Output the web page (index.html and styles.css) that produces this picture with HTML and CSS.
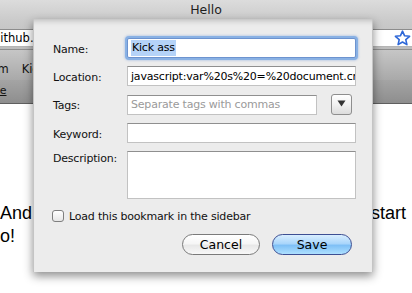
FILE: index.html
```html
<!DOCTYPE html>
<html>
<head>
<meta charset="utf-8">
<link rel="stylesheet" href="styles.css">
</head>
<body>
<div class="win">
  <div class="titlebar">Hello</div>
  <div class="toolbar">
    <div class="url">
      <span class="url-text">github.com/defunkt</span>
      <svg class="star" width="17" height="16" viewBox="0 0 17 16"><path d="M8.5 1.2 L10.6 5.8 L15.6 6.3 L11.8 9.6 L12.9 14.6 L8.5 12 L4.1 14.6 L5.2 9.6 L1.4 6.3 L6.4 5.8 Z" fill="#fff" stroke="#2d67d8" stroke-width="1.6" stroke-linejoin="round"/></svg>
    </div>
  </div>
  <div class="bookmarks"><span class="bm bm-first">Random</span><span class="bm">Kick ass</span></div>
  <div class="tabs"><span class="tab">Home</span></div>
  <div class="page">
    <p class="line"><span>And</span><span>start</span></p>
    <p class="line">o!</p>
  </div>

  <div class="sheet">
    <div class="form">
      <label class="lbl">Name:</label>
      <div class="field focused"><span class="sel">Kick ass</span></div>

      <label class="lbl">Location:</label>
      <div class="field">javascript:var%20s%20=%20document.createElement('script');</div>

      <label class="lbl">Tags:</label>
      <div class="tagrow">
        <div class="field tagfield"><span class="ph">Separate tags with commas</span></div>
        <div class="dd"><svg width="9" height="7" viewBox="0 0 9 7"><path d="M0.5 0.5 L8.5 0.5 L4.5 6.5 Z" fill="#333"/></svg></div>
      </div>

      <label class="lbl">Keyword:</label>
      <div class="field"></div>

      <label class="lbl lbl-top">Description:</label>
      <div class="field area"></div>
    </div>

    <div class="checkrow">
      <span class="cb"></span>
      <span class="cbtext">Load this bookmark in the sidebar</span>
    </div>

    <div class="btnrow">
      <button class="btn cancel">Cancel</button>
      <button class="btn save">Save</button>
    </div>
  </div>
</div>
</body>
</html>
```

FILE: styles.css
```css
* { box-sizing: border-box; }
html, body { margin: 0; padding: 0; }
body { width: 412px; height: 293px; overflow: hidden; background: #fff; }

.win {
  position: relative;
  width: 412px;
  height: 293px;
  overflow: hidden;
  font-family: "DejaVu Sans", sans-serif;
}

.titlebar {
  height: 20px;
  background: linear-gradient(#dcdcdc, #cbcbcb);
  text-align: center;
  font-size: 12.5px;
  line-height: 20px;
  color: #1e1e1e;
}

.toolbar {
  height: 29px;
  padding-top: 9px;
  background: linear-gradient(#cbcbcb, #bcbcbc);
}
.url {
  height: 18px;
  margin-right: -20px;
  display: flex;
  align-items: center;
  justify-content: space-between;
  background: #fff;
  border-top: 1px solid #8c8c8c;
  border-bottom: 1px solid #b5b5b5;
  overflow: hidden;
  padding-right: 20px;
}
.url-text {
  font-size: 11.5px;
  margin-left: -7px;
  color: #000;
  white-space: nowrap;
}
.star { margin-right: 1px; }

.bookmarks {
  height: 31px;
  border-top: 1px solid #8e8e8e;
  background: linear-gradient(#c6c6c6, #a9a9a9);
  display: flex;
  align-items: flex-end;
  gap: 13px;
  padding-bottom: 4px;
  font-size: 11.5px;
  color: #111;
  white-space: nowrap;
}
.bm-first { margin-left: -39px; }

.tabs {
  height: 24px;
  background: linear-gradient(#a4a4a4, #8e8e8e);
  border-bottom: 1px solid #5f5f5f;
  font-size: 11px;
  padding-top: 4px;
  white-space: nowrap;
}
.tab {
  display: inline-block;
  margin-left: -26px;
  text-decoration: underline;
  color: #111;
}

.page {
  padding-top: 98px;
  font-family: "Liberation Sans", Arial, sans-serif;
  font-size: 18px;
  line-height: 23px;
  color: #000;
}
.line { margin: 0; display: flex; justify-content: space-between; padding-right: 6px; }

/* Sheet */
.sheet {
  position: absolute;
  left: 33px;
  top: 19px;
  width: 340px;
  height: 253px;
  padding: 19px 17px 18px 20px;
  background: #ececec;
  border-left: 1px solid #c4c4c4;
  border-right: 1px solid #c4c4c4;
  box-shadow: 0 4px 9px rgba(0,0,0,0.45), inset 0 7px 6px -6px rgba(0,0,0,0.25);
  font-size: 11px;
  letter-spacing: -0.2px;
  color: #111;
}
.sheet .form, .sheet .checkrow, .sheet .btnrow { margin-left: -1px; margin-right: -1px; }

.form {
  display: grid;
  grid-template-columns: 74px 1fr;
  row-gap: 8px;
}
.lbl {
  display: flex;
  align-items: center;
  height: 20px;
  padding-top: 2px;
}
.lbl-top { align-items: flex-start; padding-top: 1px; }

.field {
  height: 20px;
  background: #fff;
  border: 1px solid #c2c2c2;
  border-top-color: #8f8f8f;
  padding: 0 3px;
  display: flex;
  align-items: center;
  white-space: nowrap;
  overflow: hidden;
  color: #000;
}
.field.focused {
  border: 1px solid #6d93cf;
  border-radius: 2px;
  box-shadow: 0 0 0 2px #89b1e4, 0 0 2px 3px rgba(120,160,220,0.35);
  padding-left: 3px;
}
.sel {
  background: #b5d3f8;
  padding: 1px 1px;
  line-height: 14px;
}
.tagrow {
  display: flex;
  justify-content: space-between;
  align-items: center;
  padding-right: 4px;
}
.tagfield { width: 190px; }
.ph { color: #9a9a9a; }
.dd {
  width: 21px;
  height: 21px;
  border: 1px solid #8e8e8e;
  border-radius: 3px;
  background: linear-gradient(#ffffff, #f1f1f1 50%, #dcdcdc);
  display: flex;
  align-items: center;
  justify-content: center;
  padding-bottom: 2px;
}
.area { height: 48px; }

.checkrow {
  margin-top: 11px;
  display: flex;
  align-items: center;
  gap: 5px;
  height: 12px;
}
.cb {
  width: 12px;
  height: 12px;
  margin-left: -1px;
  border: 1px solid #7f7f7f;
  border-radius: 3px;
  background: linear-gradient(#ffffff, #e6e6e6);
}
.cbtext { color: #111; }

.btnrow {
  margin-top: 12px;
  display: flex;
  justify-content: flex-end;
  gap: 12px;
  padding-right: 4px;
}
.btn {
  height: 21px;
  border-radius: 11px;
  font-family: "DejaVu Sans", sans-serif;
  font-size: 12.5px;
  letter-spacing: 0;
  color: #000;
  padding: 0;
  line-height: 19px;
}
.cancel {
  width: 78px;
  border: 1px solid #7a7a7a;
  background: linear-gradient(#ffffff, #f6f6f6 45%, #e8e8e8 55%, #f8f8f8);
}
.save {
  width: 80px;
  border: 1px solid #3d4f93;
  background: linear-gradient(#d9eeff, #aad6fb 45%, #7fc0f6 55%, #aee0ff);
}
```
